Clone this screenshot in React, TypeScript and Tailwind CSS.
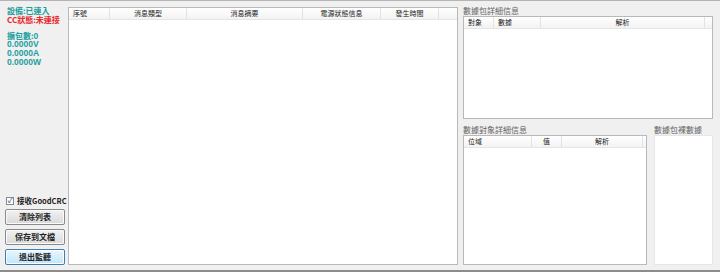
const font = "font-['Noto_Sans_CJK_TC','Liberation_Sans',sans-serif]"

const HeaderCell = ({ label, w, align = "center" }: { label: string; w: string; align?: string }) => (
  <div className={`${w} h-full flex items-center border-r border-[#e3e3e3] px-[4px] ${align === "left" ? "justify-start" : "justify-center"}`}>
    {label}
  </div>
)

const Btn = ({ label, focused }: { label: string; focused?: boolean }) => (
  <button
    className={`w-[60px] h-[16px] rounded-[2px] border text-[8px] font-bold text-[#222] leading-none flex items-center justify-center bg-gradient-to-b ${
      focused
        ? "border-[#3c7fb1] from-[#eaf6fd] to-[#bee6fd] shadow-[inset_0_0_0_1px_#fff]"
        : "border-[#8a8a8a] from-[#f2f2f2] to-[#d9d9d9] shadow-[inset_0_0_0_1px_#fafafa]"
    }`}
  >
    {label}
  </button>
)

export default function App() {
  return (
    <div className={`w-[720px] h-[272px] bg-[#f0f0f0] border-t border-[#b4b4b4] border-b-2 border-b-[#8c8c8c] flex ${font}`}>
      {/* left status column */}
      <div className="w-[68px] shrink-0 flex flex-col pl-[7px] pt-[5px] pb-[5px] text-[8px] font-bold leading-[9px] whitespace-nowrap">
        <p className="text-[#1b9e9e]">
          設備:已連入
          <br />
          <span className="text-[#e8262a]">CC狀態:未連接</span>
        </p>
        <div className="text-[#1b9e9e] mt-[7px]">擴包數:0</div>
        <div className="text-[#1b9e9e] text-[8.5px] font-['Liberation_Sans',sans-serif]">0.0000V</div>
        <div className="text-[#1b9e9e] text-[8.5px] font-['Liberation_Sans',sans-serif]">0.0000A</div>
        <div className="text-[#1b9e9e] text-[8.5px] font-['Liberation_Sans',sans-serif]">0.0000W</div>
        <div className="flex-1" />
        <label className="flex items-center gap-[3px] text-[#222] text-[7.5px] -ml-[1px]">
          <span className="w-[8px] h-[8px] shrink-0 border border-[#8a8a8a] bg-white flex items-center justify-center text-[7px] leading-none text-[#4a6fa5]">✓</span>
          接收GoodCRC
        </label>
        <div className="flex flex-col gap-[4px] mt-[4px] -ml-[2px]">
          <Btn label="清除列表" />
          <Btn label="保存到文檔" />
          <Btn label="退出監聽" focused />
        </div>
      </div>

      {/* message list */}
      <div className="w-[390px] shrink-0 mt-[6px] mb-[5px] border border-[#b9b9b9] bg-white">
        <div className="h-[12px] flex text-[7px] text-[#222] bg-gradient-to-b from-white to-[#f3f3f3] border-b border-[#e5e5e5]">
          <HeaderCell label="序號" w="w-[41px]" align="left" />
          <HeaderCell label="消息類型" w="w-[77px]" />
          <HeaderCell label="消息摘要" w="w-[116px]" />
          <HeaderCell label="電源狀態信息" w="w-[78px]" />
          <HeaderCell label="發生時間" w="w-[58px]" />
        </div>
      </div>

      {/* right panels */}
      <div className="flex-1 flex flex-col pl-[5px] pr-[7px] pt-[5px] pb-[5px] text-[8px] text-[#666]">
        <div className="leading-[10px]">數據包詳細信息</div>
        <div className="h-[103px] border border-[#b9b9b9] bg-white">
          <div className="h-[12px] flex text-[7px] text-[#222] bg-gradient-to-b from-white to-[#f3f3f3] border-b border-[#e5e5e5]">
            <HeaderCell label="對象" w="w-[30px]" align="left" />
            <HeaderCell label="數據" w="w-[47px]" align="left" />
            <HeaderCell label="解析" w="w-[164px]" />
          </div>
        </div>
        <div className="flex-1 flex gap-[7px] mt-[6px]">
          <div className="w-[184px] flex flex-col">
            <div className="leading-[10px]">數據對象詳細信息</div>
            <div className="flex-1 border border-[#b9b9b9] bg-white">
              <div className="h-[12px] flex text-[7px] text-[#222] bg-gradient-to-b from-white to-[#f3f3f3] border-b border-[#e5e5e5]">
                <HeaderCell label="位域" w="w-[68px]" align="left" />
                <HeaderCell label="值" w="w-[30px]" />
                <HeaderCell label="解析" w="w-[81px]" />
              </div>
            </div>
          </div>
          <div className="flex-1 flex flex-col">
            <div className="leading-[10px]">數據包裸數據</div>
            <div className="flex-1 border border-[#e6e6e6] bg-white" />
          </div>
        </div>
      </div>
    </div>
  )
}
